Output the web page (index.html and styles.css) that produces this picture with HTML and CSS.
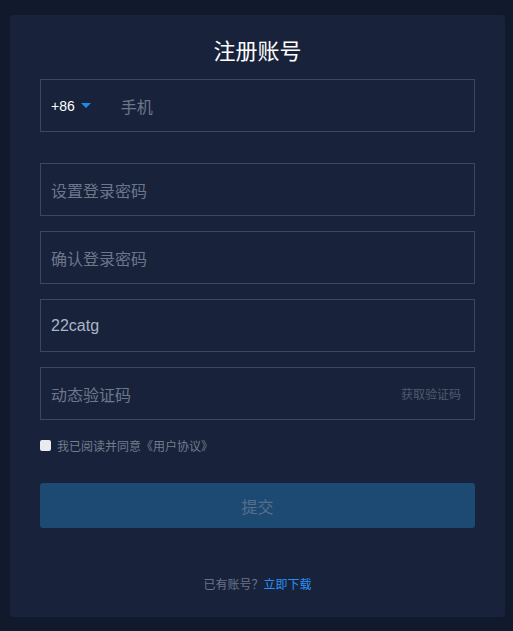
FILE: index.html
```html
<!DOCTYPE html>
<html lang="zh-CN">
<head>
<meta charset="utf-8">
<title>注册账号</title>
<link rel="stylesheet" href="styles.css">
</head>
<body>
<div class="page">
  <div class="card">
    <h1 class="title">注册账号</h1>
    <div class="form">
      <div class="field phone">
        <span class="code">+86</span>
        <span class="caret"></span>
        <span class="ph phone-ph">手机</span>
      </div>
      <div class="spacer"></div>
      <div class="field"><span class="ph">设置登录密码</span></div>
      <div class="field"><span class="ph">确认登录密码</span></div>
      <div class="field"><span class="val">22catg</span></div>
      <div class="field sms">
        <span class="ph">动态验证码</span>
        <span class="get">获取验证码</span>
      </div>
      <label class="agree"><span class="box"></span><span>我已阅读并同意《用户协议》</span></label>
      <div class="submit">提交</div>
    </div>
    <div class="footer">已有账号？<span class="link">立即下载</span></div>
  </div>
</div>
</body>
</html>
```
FILE: styles.css
```css
html, body {
  margin: 0;
  padding: 0;
  background: #111a2d;
}
body {
  font-family: "Liberation Sans", "Noto Sans CJK SC", sans-serif;
  width: 513px;
  height: 631px;
  overflow: hidden;
}
.page {
  padding: 15px 8px 14px 10px;
}
.card {
  box-sizing: border-box;
  width: 495px;
  height: 602px;
  background: #18233b;
  border-radius: 3px;
  padding: 0 30px;
  display: flex;
  flex-direction: column;
}
.title {
  margin: 22px 0 0;
  height: 42px;
  line-height: 30px;
  font-size: 22px;
  font-weight: normal;
  color: #ffffff;
  text-align: center;
}
.form {
  display: flex;
  flex-direction: column;
  gap: 15px;
}
.field {
  box-sizing: border-box;
  height: 53px;
  border: 1px solid #3a4760;
  display: flex;
  align-items: center;
  padding: 0 13px 0 10px;
  font-size: 16px;
}
.spacer {
  height: 1px;
}
.ph {
  color: #6c778b;
}
.val {
  color: #aab5c9;
}
.code {
  color: #ffffff;
  font-size: 14px;
}
.caret {
  width: 0;
  height: 0;
  border-left: 5px solid transparent;
  border-right: 5px solid transparent;
  border-top: 5px solid #1c8ae6;
  margin-left: 6px;
}
.phone-ph {
  margin-left: 30px;
}
.sms {
  justify-content: space-between;
}
.get {
  font-size: 12px;
  color: #4e5a6e;
}
.agree {
  display: flex;
  align-items: center;
  margin-top: 2px;
  font-size: 12px;
  color: #737d8f;
  height: 16px;
}
.box {
  width: 11px;
  height: 11px;
  background: #e8eaee;
  border-radius: 2px;
  margin-right: 6px;
}
.submit {
  margin-top: 15px;
  height: 45px;
  border-radius: 3px;
  background: #1d4a73;
  color: #566f8e;
  font-size: 16px;
  display: flex;
  align-items: center;
  justify-content: center;
}
.footer {
  margin-top: 47px;
  text-align: center;
  font-size: 12px;
  color: #6a7487;
}
.link {
  color: #2a8ef2;
}
```
